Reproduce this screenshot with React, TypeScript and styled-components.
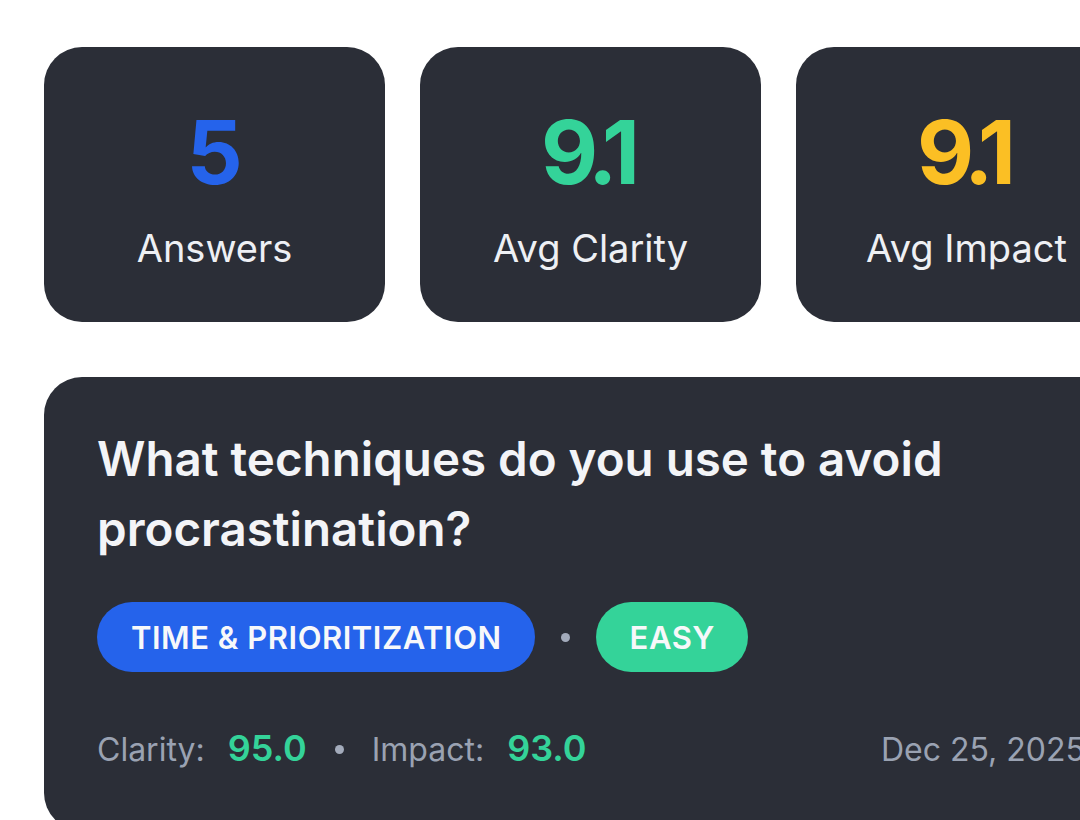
import React from "react";
import styled, { createGlobalStyle } from "styled-components";

const GlobalStyle = createGlobalStyle`
  html, body {
    margin: 0;
    padding: 0;
    background: #ffffff;
    overflow: hidden;
  }
  body {
    font-family: Inter, "Noto Sans", "Liberation Sans", sans-serif;
    -webkit-font-smoothing: antialiased;
  }
`;

const Page = styled.div`
  width: 1093px;
  padding: 47px 0 0 44px;
  display: flex;
  flex-direction: column;
  gap: 55px;
`;

const StatRow = styled.div`
  display: grid;
  grid-template-columns: repeat(3, 341px);
  gap: 35px;
`;

const StatCard = styled.div`
  background: #2b2e37;
  border-radius: 38px;
  padding: 61px 0 51px;
  display: flex;
  flex-direction: column;
  align-items: center;
  gap: 29px;
`;

const StatValue = styled.div<{ color: string }>`
  font-size: 88px;
  line-height: 88px;
  font-weight: 700;
  letter-spacing: -0.085em;
  text-indent: -0.085em;
  color: ${(props) => props.color};
`;

const StatLabel = styled.div`
  font-size: 38px;
  line-height: 46px;
  color: #eef0f4;
`;

const QuestionCard = styled.div`
  background: #2b2e37;
  border-radius: 38px;
  padding: 47px 52px 60px 53px;
  display: flex;
  flex-direction: column;
`;

const Title = styled.h2`
  margin: 0;
  font-size: 47.5px;
  line-height: 70px;
  font-weight: 600;
  color: #f3f4f7;
`;

const TagRow = styled.div`
  display: flex;
  align-items: center;
  gap: 26px;
  margin-top: 38px;
`;

const Pill = styled.span<{ bg: string }>`
  display: inline-flex;
  align-items: center;
  height: 70px;
  padding: 0 33px 0 34px;
  border-radius: 35px;
  background: ${(props) => props.bg};
  color: #f7f8fa;
  font-size: 31px;
  font-weight: 600;
  letter-spacing: 0.017em;
`;

const Dot = styled.span`
  width: 9px;
  height: 9px;
  border-radius: 50%;
  background: #a3abbb;
`;

const MetaRow = styled.div`
  display: flex;
  align-items: center;
  justify-content: space-between;
  margin-top: 55px;
`;

const Scores = styled.div`
  display: flex;
  align-items: center;
  gap: 28px;
`;

const Score = styled.span`
  display: inline-flex;
  align-items: baseline;
  gap: 23px;
`;

const MetaLabel = styled.span`
  font-size: 32px;
  line-height: 43px;
  color: #9aa2b2;
`;

const ScoreValue = styled.span`
  font-size: 36px;
  line-height: 43px;
  font-weight: 600;
  color: #34d399;
`;

const stats = [
  { value: "5", label: "Answers", color: "#2563eb" },
  { value: "9.1", label: "Avg Clarity", color: "#34d399" },
  { value: "9.1", label: "Avg Impact", color: "#fbbf24" },
];

const App: React.FC = () => {
  return (
    <>
      <GlobalStyle />
      <Page>
        <StatRow>
          {stats.map((s) => (
            <StatCard key={s.label}>
              <StatValue color={s.color}>{s.value}</StatValue>
              <StatLabel>{s.label}</StatLabel>
            </StatCard>
          ))}
        </StatRow>
        <QuestionCard>
          <Title>
            What techniques do you use to avoid
            <br />
            procrastination?
          </Title>
          <TagRow>
            <Pill bg="#2563eb">TIME &amp; PRIORITIZATION</Pill>
            <Dot />
            <Pill bg="#34d399">EASY</Pill>
          </TagRow>
          <MetaRow>
            <Scores>
              <Score>
                <MetaLabel>Clarity:</MetaLabel>
                <ScoreValue>95.0</ScoreValue>
              </Score>
              <Dot />
              <Score>
                <MetaLabel>Impact:</MetaLabel>
                <ScoreValue>93.0</ScoreValue>
              </Score>
            </Scores>
            <MetaLabel>Dec 25, 2025</MetaLabel>
          </MetaRow>
        </QuestionCard>
      </Page>
    </>
  );
};

export default App;
